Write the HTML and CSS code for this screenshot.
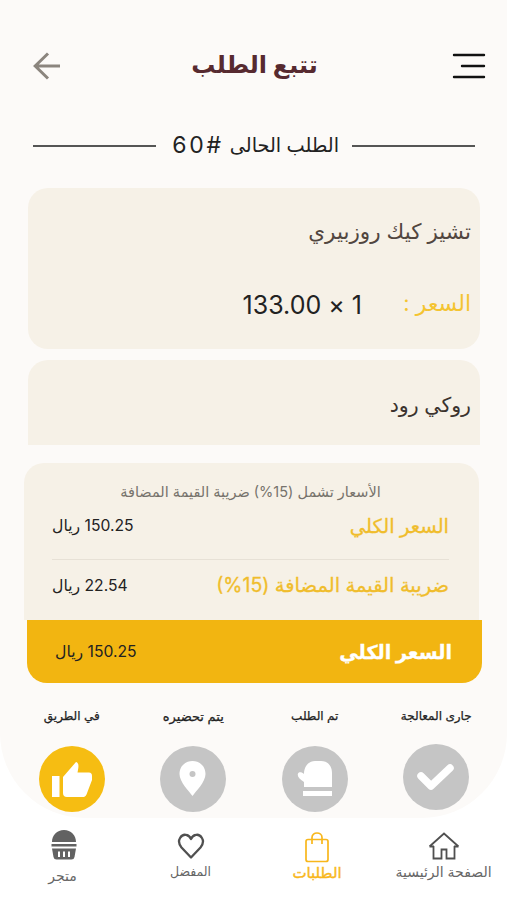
FILE: index.html
```html
<!DOCTYPE html>
<html lang="ar" dir="rtl">
<head>
  <meta charset="UTF-8">
  <meta name="viewport" content="width=device-width, initial-scale=1.0">
  <title>تتبع الطلب</title>
  <link rel="stylesheet" href="styles.css">
</head>
<body>
  <div class="screen">
    <header class="header">
      <svg class="menu-icon" width="34" height="28" viewBox="0 0 34 28" fill="none" stroke="#111" stroke-width="2.4" stroke-linecap="round">
        <path d="M2 3h30M10 14h22M2 25h30"/>
      </svg>
      <h1>تتبع الطلب</h1>
      <svg class="back-icon" width="28" height="28" viewBox="0 0 28 28" fill="none" stroke="#8b857e" stroke-width="3">
        <path d="M27 14H2M15 1.5L2.200 14L15 26.500"/>
      </svg>
    </header>

    <div class="current"><h2><span>الطلب الحالى</span><span class="num" lang="en" dir="ltr"><span>60</span><span>#</span></span></h2></div>

    <section class="item">
      <div class="item-name">تشيز كيك روزبيري</div>
      <div class="item-price">
        <span class="price-label">السعر :</span>
        <span class="price-value">1 × 133.00</span>
      </div>
    </section>
    <section class="item cut">
      <div class="item-name">روكي رود</div>
    </section>

    <section class="summary">
      <div class="note">الأسعار تشمل (15%) ضريبة القيمة المضافة</div>
      <div class="row">
        <span class="label">السعر الكلي</span>
        <span class="amount">150.25 ريال</span>
      </div>
      <div class="row tax">
        <span class="label">ضريبة القيمة المضافة (15%)</span>
        <span class="amount">22.54 ريال</span>
      </div>
    </section>
    <div class="total">
      <span class="label">السعر الكلي</span>
      <span class="amount">150.25 ريال</span>
    </div>

    <div class="steps">
      <div class="step first">
        <span>جارى المعالجة</span>
        <div class="circle">
          <svg width="66" height="66" viewBox="0 0 66 66" fill="none" stroke="#fff" stroke-width="7.500" stroke-linecap="round" stroke-linejoin="round"><path d="M18 32L28 42L47 24"/></svg>
        </div>
      </div>
      <div class="step">
        <span>تم الطلب</span>
        <div class="circle">
          <svg width="66" height="66" viewBox="0 0 66 66" fill="#fff"><path d="M22 41V36C17 33 15 30 16 27.500C17 25.500 20 26 22 28C22 20 27 15 33 15H39C46 15 50 20 50 27V41ZM21 45H50V50H21Z"/></svg>
        </div>
      </div>
      <div class="step">
        <span>يتم تحضيره</span>
        <div class="circle">
          <svg width="66" height="66" viewBox="0 0 66 66" fill="#fff"><path d="M32.500 50C29 45 19.500 36 19.500 28C19.500 20.500 25 15 32.500 15S45.500 20.500 45.500 28C45.500 36 36 45 32.500 50Z"/><circle cx="32.500" cy="28" r="3" fill="#c5c5c5"/></svg>
        </div>
      </div>
      <div class="step active">
        <span>في الطريق</span>
        <div class="circle">
          <svg width="66" height="66" viewBox="0 0 66 66" fill="#fff"><path d="M13 30H20.500V51H13ZM24 31L37 16C40 17 40 20 38.500 26.500H50C52 26.500 53 28 53 30V34L47.500 48.500C46.500 50.500 45.500 51 43.500 51H28Q24 51 24 47Z"/></svg>
        </div>
      </div>
    </div>
  </div>

  <nav class="nav">
    <a class="home">
      <svg width="34" height="28" viewBox="0 0 34 28" fill="none" stroke="#505050" stroke-width="1.800"><path d="M6.500 14V26.500H14.500V17.500H19.500V26.500H27.500V14M2.500 14.500H7M27 14.500H31.500M2.500 14.500L17 1.500L31.500 14.500"/></svg>
      <span>الصفحة الرئيسية</span>
    </a>
    <a class="orders">
      <svg width="26" height="32" viewBox="0 0 26 32" fill="none" stroke="#f8b71c" stroke-width="1.700"><rect x="2" y="8.500" width="22" height="22" rx="2"/><path d="M8 13V6.500C8 .500 18 .500 18 6.500V13"/></svg>
      <span>الطلبات</span>
    </a>
    <a class="fav">
      <svg width="28" height="26" viewBox="0 0 28 26" fill="none" stroke="#505050" stroke-width="2.300" stroke-linejoin="round"><path d="M14 24.500L4.500 14.500C-1.500 7 5 .800 9.500 2C12 2.500 13 4 14 6C15 4 16 2.500 18.500 2C23 .800 29.500 7 23.500 14.500Z"/></svg>
      <span>المفضل</span>
    </a>
    <a class="shop">
      <svg width="26" height="30" viewBox="0 0 26 30" fill="#626262"><path d="M1 12C1 5 6 0 13 0S25 5 25 12ZM.500 14H25.500V16.500H.500ZM1 18.500H25L23.500 27Q23 29.500 20.500 29.500H5.500Q3 29.500 2.500 27Z"/><path d="M8 21.500V27M13 21.500V27M18 21.500V27" stroke="#fff" stroke-width="2"/></svg>
      <span>متجر</span>
    </a>
  </nav>
</body>
</html>
```
FILE: styles.css
```css
* {
  box-sizing: border-box;
}
body {
  margin: 0;
  height: 900px;
  overflow: hidden;
  background: #fff;
  font-family: Inter, 'DejaVu Sans', sans-serif;
  color: #222;
}
.screen {
  height: 818px;
  background: #fcfaf8;
  border-radius: 0 0 85px 85px;
}
.header {
  height: 131px;
  padding: 0 21px 0 33px;
  display: flex;
  align-items: center;
  justify-content: space-between;
}
h1 {
  margin: 0;
  padding: 0 4px 2px 0;
  font-size: 24px;
  line-height: 38px;
  font-weight: 700;
  color: #572a30;
}
.current {
  height: 30px;
  margin: 0 32px 0 33px;
  display: flex;
  align-items: center;
}
.current::before,
.current::after {
  content: '';
  flex: 1;
  height: 2px;
  background: #555;
}
h2 {
  margin: 0;
  width: 196px;
  padding: 0 13px 3px 0;
  display: flex;
  align-items: center;
  gap: 6px;
  font-size: 19.3px;
  font-weight: 400;
  line-height: 28px;
  white-space: nowrap;
}
.num {
  font-size: 23px;
  letter-spacing: 2.7px;
}
.item {
  height: 161px;
  margin: 27px 27px 0 28px;
  padding: 25px 9px 0;
  background: #f6f1e7;
  border-radius: 20px;
}
.item.cut {
  height: 85px;
  margin-top: 11px;
  padding-top: 26px;
  border-radius: 20px 20px 0 0;
}
.item-name {
  font-size: 21.5px;
  line-height: 36px;
  color: #51463f;
}
.cut .item-name {
  font-size: 20.5px;
  line-height: 38px;
  color: #3b332e;
}
.item-price {
  margin-top: 35px;
  display: flex;
  align-items: center;
  line-height: 38px;
}
.price-label {
  width: 109px;
  padding-bottom: 2px;
  font-size: 22px;
  color: #f4c431;
}
.price-value {
  padding-top: 1px;
  font-size: 25px;
}
.summary {
  height: 157px;
  margin: 18px 28px 0 24px;
  padding: 17px 30px 0 28px;
  background: #f6f1e7;
  border-radius: 20px 20px 0 0;
}
.note {
  height: 24px;
  font-size: 14.5px;
  line-height: 24px;
  text-align: center;
  color: #77736c;
}
.row {
  height: 56px;
  padding-bottom: 12px;
  display: flex;
  align-items: center;
  justify-content: space-between;
  border-bottom: 1px solid #e7e1d6;
}
.row.tax {
  height: 50px;
  padding: 0;
  border: 0;
}
.label {
  font-size: 19.5px;
  color: #f0bd2c;
  -webkit-text-stroke: 0.3px;
  white-space: nowrap;
}
.amount {
  font-size: 15.7px;
  white-space: nowrap;
}
.total {
  height: 63px;
  margin: 0 25px 0 27px;
  padding: 0 30px 0 28px;
  display: flex;
  align-items: center;
  justify-content: space-between;
  background: #f2b511;
  border-radius: 0 0 20px 20px;
}
.total .label {
  font-size: 19.2px;
  color: #fff;
  font-weight: 700;
}
.steps {
  margin: 21px 10px 0 11px;
  display: grid;
  grid-template-columns: repeat(4, 1fr);
}
.step {
  display: flex;
  flex-direction: column;
  align-items: center;
  font-size: 12px;
  line-height: 24px;
  -webkit-text-stroke: 0.25px;
}
.step:nth-child(3) {
  font-size: 13px;
}
.circle {
  width: 66px;
  height: 66px;
  margin-top: 18px;
  border-radius: 50%;
  background: #c5c5c5;
}
.first .circle {
  margin-top: 16px;
}
.active .circle {
  background: #f6bd12;
}
.nav {
  height: 82px;
  display: grid;
  grid-template-columns: 127px 126px 127px 127px;
  color: #666;
}
.nav a {
  display: flex;
  flex-direction: column;
  align-items: center;
  padding-top: 14px;
  font-size: 14px;
  line-height: 24px;
  white-space: nowrap;
}
.nav .orders {
  padding-top: 13px;
}
.orders span {
  margin-top: -2px;
  font-size: 15px;
  color: #f8b71c;
  -webkit-text-stroke: 0.4px;
}
.nav .fav {
  padding-top: 15px;
}
.fav span {
  margin-top: 1px;
  font-size: 12.5px;
}
.nav .shop {
  padding-top: 12px;
}
.shop span {
  margin: 4px 0 0 -2px;
}
```
